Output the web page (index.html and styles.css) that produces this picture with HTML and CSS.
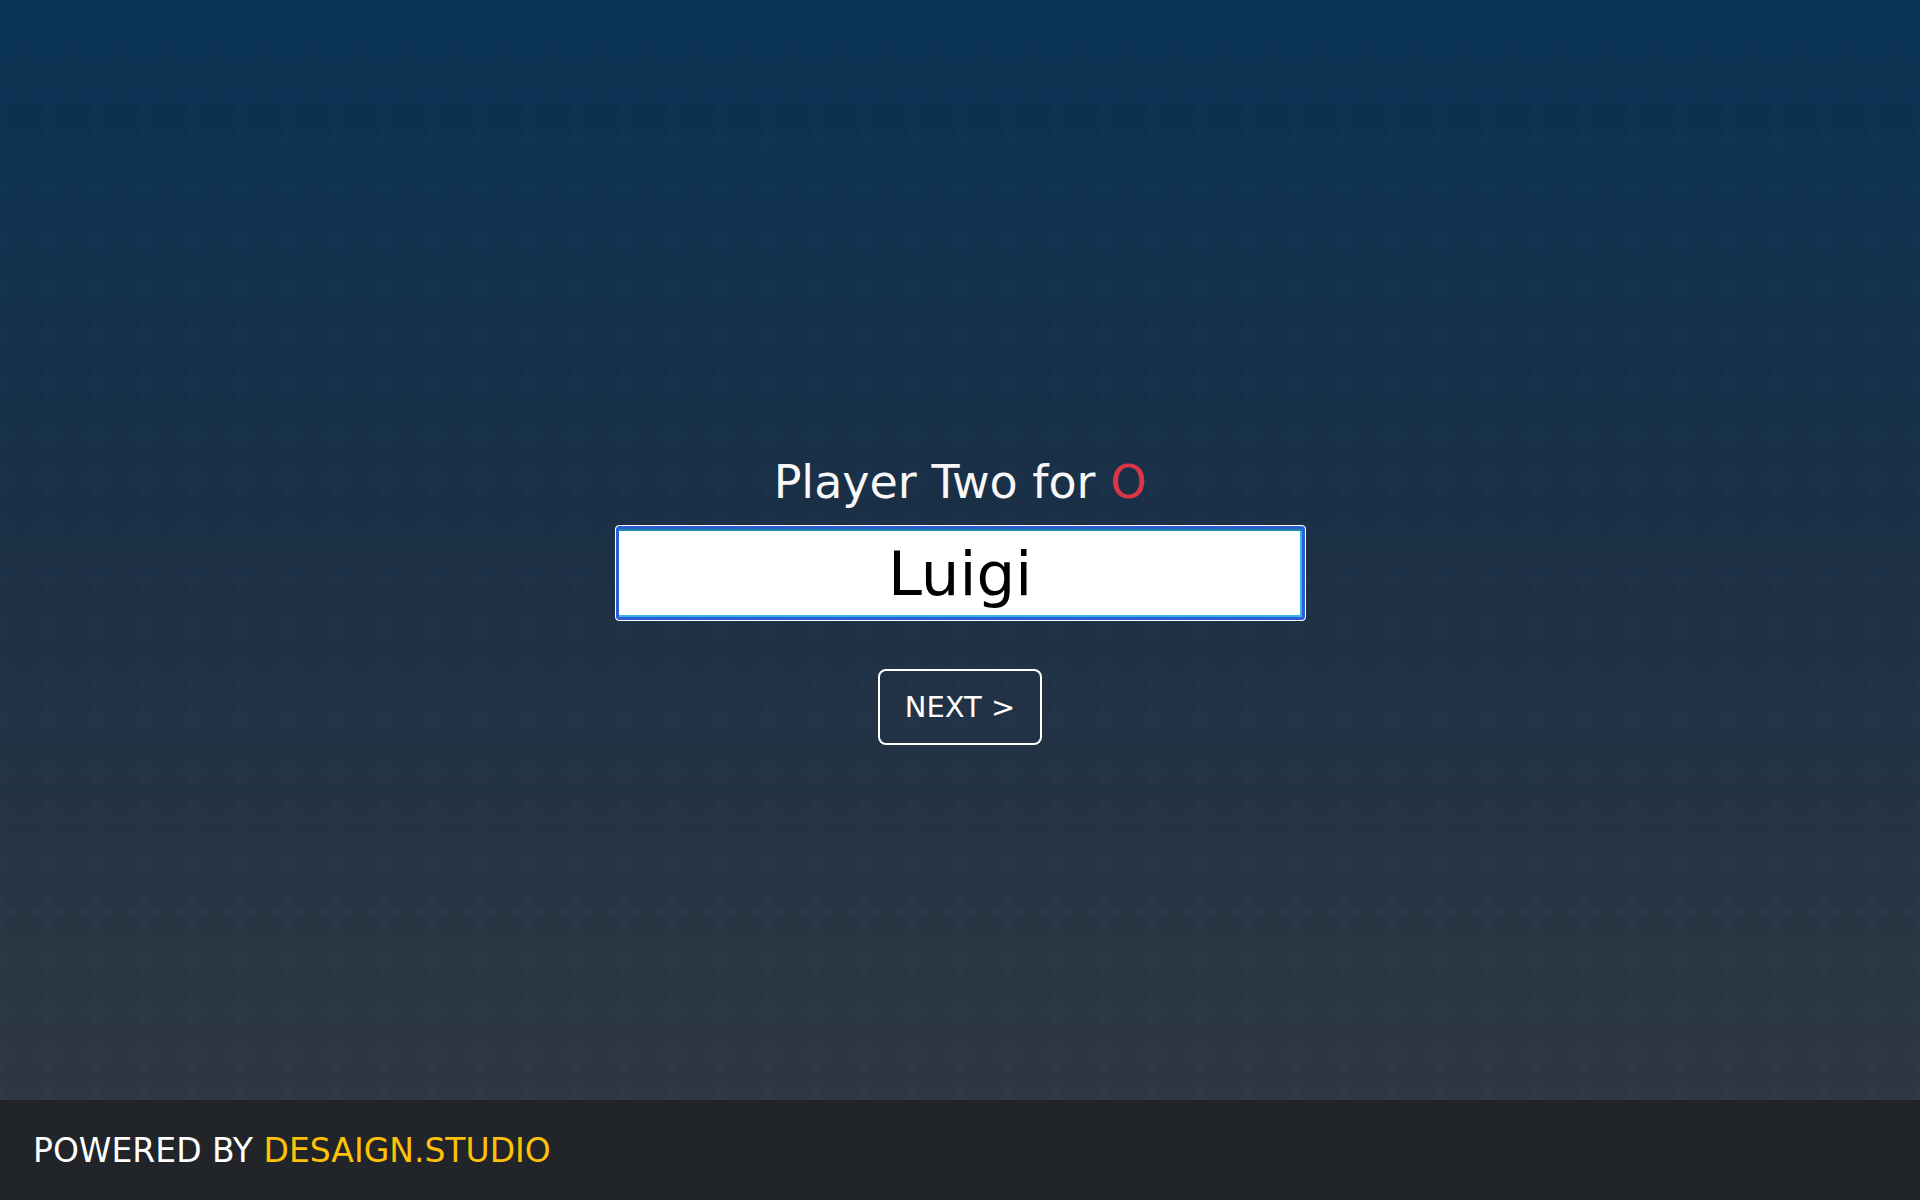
FILE: index.html
```html
<!DOCTYPE html>
<html lang="en">
<head>
<meta charset="utf-8">
<title>Tic Tac Toe - Player Two</title>
<link rel="stylesheet" href="styles.css">
</head>
<body>
<div class="page">
  <main class="stage">
    <form class="setup">
      <h1 class="setup-title">Player Two for <span class="mark-o">O</span></h1>
      <input class="name-input" type="text" value="Luigi">
      <button class="next-btn" type="button">NEXT &gt;</button>
    </form>
  </main>
  <footer class="footer">
    <span class="footer-text">POWERED BY <span class="brand">DESAIGN.STUDIO</span></span>
  </footer>
</div>
</body>
</html>
```
FILE: styles.css
```css
* { box-sizing: border-box; }
html, body { margin: 0; padding: 0; }
body {
  width: 1920px;
  height: 1200px;
  overflow: hidden;
  font-family: "DejaVu Sans", "Noto Sans", sans-serif;
  background-color: #1d3046;
  background-image:
    radial-gradient(circle at center, rgba(0, 0, 0, 0.045) 23px, rgba(0, 0, 0, 0) 24.5px),
    linear-gradient(180deg, #093457 0%, #1c3148 45%, #303a45 92%, #323b45 100%);
  background-size: 48px 48px, 100% 100%;
}
.page {
  height: 1200px;
  display: flex;
  flex-direction: column;
}
.stage {
  flex: 1;
  padding-top: 100px;
  display: flex;
  align-items: center;
  justify-content: center;
}
.setup {
  display: flex;
  flex-direction: column;
  align-items: center;
}
.setup-title {
  margin: 0 0 16px;
  font-weight: 400;
  font-size: 46px;
  line-height: 54px;
  color: #f7f7f7;
}
.mark-o { color: #dc3545; }
.name-input {
  width: 691px;
  height: 96px;
  border: 1px solid #ffffff;
  border-radius: 4px;
  background: #ffffff;
  box-shadow:
    inset 0 0 0 3px #2a5fd4,
    inset 0 5px 0 #1a8aa8,
    inset 0 -5px 0 #35b6ea,
    inset -5px 0 0 #35b6ea;
  font-family: "DejaVu Sans", "Noto Sans", sans-serif;
  font-size: 61px;
  color: #000;
  text-align: center;
  padding: 0 10px;
  outline: none;
}
.next-btn {
  margin-top: 48px;
  width: 164px;
  height: 76px;
  border: 2px solid #ffffff;
  border-radius: 8px;
  background: transparent;
  color: #ffffff;
  font-family: "DejaVu Sans", "Noto Sans", sans-serif;
  font-size: 29px;
  padding: 0;
}
.footer {
  height: 100px;
  background: #212428;
  display: flex;
  align-items: center;
  padding-left: 33px;
}
.footer-text {
  font-size: 33px;
  color: #ffffff;
}
.brand { color: #ffc107; }
```
